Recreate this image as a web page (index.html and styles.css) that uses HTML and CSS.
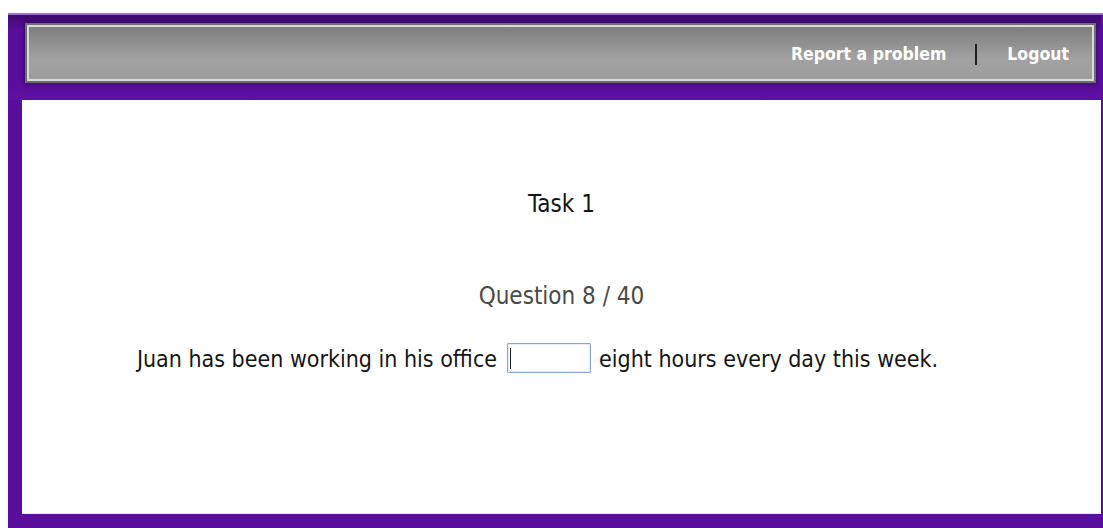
FILE: index.html
```html
<!DOCTYPE html>
<html lang="en">
<head>
<meta charset="utf-8">
<title>Task 1 - Question 8 / 40</title>
<link rel="stylesheet" href="styles.css">
</head>
<body>
  <div class="frame">
    <div class="frame-bar">
      <nav class="toolbar">
        <a class="toolbar-link" href="#">Report a problem</a>
        <span class="toolbar-sep"></span>
        <a class="toolbar-link" href="#">Logout</a>
      </nav>
    </div>
    <main class="sheet">
      <h1 class="task-title">Task 1</h1>
      <section class="question">
        <h2 class="question-count">Question 8 / 40</h2>
        <div class="question-line">
          <span class="question-text">Juan has been working in his office</span>
          <span class="answer">
            <input class="answer-input" type="text" aria-label="Answer">
            <span class="answer-caret"></span>
          </span>
          <span class="question-text">eight hours every day this week.</span>
        </div>
      </section>
    </main>
  </div>
</body>
</html>
```

FILE: styles.css
```css
html, body {
  margin: 0;
  padding: 0;
  background: #ffffff;
  overflow: hidden;
}

body {
  padding: 13px 0 0 8px;
  font-family: "DejaVu Sans Condensed", "DejaVu Sans", sans-serif;
}

/* purple page frame */
.frame {
  width: 1095px;
  height: 515px;
  box-sizing: border-box;
  padding: 0 2px 14px 14px;
  display: flex;
  flex-direction: column;
  border-top: 2px solid #a36fd6;
  background-image:
    radial-gradient(ellipse 200px 10px at 470px 0, rgba(200, 170, 235, 0.55), rgba(200, 170, 235, 0) 100%);
  background-repeat: no-repeat;
  background-color: #5a0e9c;
}

.frame-bar {
  height: 85px;
  box-sizing: border-box;
  padding: 8px 5px 0 17px;
  margin-left: -14px;
  background: linear-gradient(#3c0a6c 0, #4a0c80 6px, #5a0e9c 16px, #5a0e9c 70px, #5e10a4 100%);
}

/* gray toolbar with a light inner rule */
.toolbar {
  height: 60px;
  box-sizing: border-box;
  display: flex;
  align-items: center;
  justify-content: flex-end;
  padding-right: 27px;
  background: linear-gradient(#7a7a7a 0, #8a8a8a 25%, #a2a2a2 60%, #9c9c9c 100%);
  box-shadow:
    inset 0 0 0 2px #6e6e6e,
    inset 0 0 0 4px #d9dcd6,
    0 0 4px 1px rgba(30, 10, 50, 0.55);
}

.toolbar-link {
  color: #ffffff;
  font-weight: bold;
  font-size: 17.5px;
  text-decoration: none;
  line-height: 22px;
  padding-top: 2px;
}

.toolbar-sep {
  width: 2px;
  height: 21px;
  background: #1e1e1e;
  margin: 2px 30px 0 29px;
}

/* white content sheet */
.sheet {
  flex: 1;
  background: #ffffff;
  border-bottom: 1px solid #f1e6f6;
  padding-top: 88px;
  margin: 0;
  color: #151515;
}

.task-title {
  margin: 0;
  text-align: center;
  font-size: 24px;
  line-height: 32px;
  font-weight: normal;
}

.question {
  margin-top: 60px;
  display: flex;
  flex-direction: column;
  align-items: center;
}

.question-count {
  margin: 0;
  font-size: 24px;
  line-height: 32px;
  font-weight: normal;
  color: #4a4a4a;
}

.question-line {
  margin-top: 31px;
  margin-right: 48px;
  display: flex;
  align-items: flex-start;
  font-size: 23px;
}

.question-text {
  line-height: 30px;
  padding-top: 1px;
  white-space: nowrap;
}

.answer {
  position: relative;
  margin: 0 8px 0 10px;
  display: block;
}

.answer-input {
  display: block;
  width: 84px;
  height: 30px;
  box-sizing: border-box;
  margin: 0;
  padding: 0 4px;
  border: 1px solid #86a9d8;
  border-radius: 1px;
  box-shadow: inset 0 0 0 1px #e3ecf7;
  background: #ffffff;
  outline: none;
  font: inherit;
}

/* text cursor resting in the empty field */
.answer-caret {
  position: absolute;
  left: 3px;
  top: 5px;
  width: 1px;
  height: 21px;
  background: #222222;
}
```
